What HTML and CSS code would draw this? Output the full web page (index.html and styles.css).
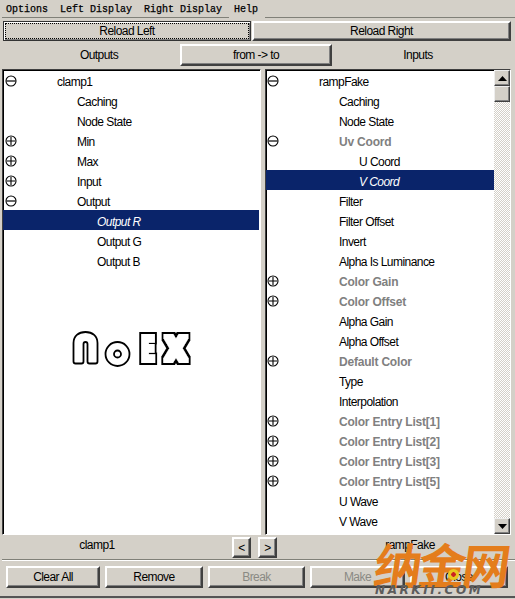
FILE: index.html
```html
<!DOCTYPE html>
<html lang="en">
<head>
<meta charset="utf-8">
<title>Connection Editor</title>
<link rel="stylesheet" href="styles.css">
</head>
<body>
<div class="window">
  <nav class="menubar">
    <span class="menu">Options</span><span class="menu">Left Display</span><span class="menu">Right Display</span><span class="menu help">Help</span>
  </nav>
  <div class="reload-row">
    <button class="btn reload-left focused">Reload Left</button>
    <button class="btn reload-right">Reload Right</button>
  </div>
  <div class="header-row">
    <div class="head-label head-left">Outputs</div>
    <button class="btn from-to">from -&gt; to</button>
    <div class="head-label head-right">Inputs</div>
  </div>
  <div class="panels">
    <section class="panel panel-left">
      <div class="tree">
        <div class="row"><svg class="ico"><use href="#minus"/></svg><span class="label l0">clamp1</span></div>
        <div class="row"><span class="label l1">Caching</span></div>
        <div class="row"><span class="label l1">Node State</span></div>
        <div class="row"><svg class="ico"><use href="#plus"/></svg><span class="label l1">Min</span></div>
        <div class="row"><svg class="ico"><use href="#plus"/></svg><span class="label l1">Max</span></div>
        <div class="row"><svg class="ico"><use href="#plus"/></svg><span class="label l1">Input</span></div>
        <div class="row"><svg class="ico"><use href="#minus"/></svg><span class="label l1">Output</span></div>
        <div class="row sel"><span class="label l2">Output R</span></div>
        <div class="row"><span class="label l2">Output G</span></div>
        <div class="row"><span class="label l2">Output B</span></div>
      </div>
      <svg class="logo" width="124" height="64" viewBox="0 -12 124 64" role="img" aria-label="NoEX">
        <defs>
          <filter id="fat" x="-50%" y="-30%" width="200%" height="160%">
            <feMorphology in="SourceAlpha" operator="dilate" radius="3.5" result="outer"/>
            <feMorphology in="SourceAlpha" operator="dilate" radius="2" result="inner"/>
            <feFlood flood-color="#fff"/>
            <feComposite in2="inner" operator="in" result="white"/>
            <feMerge><feMergeNode in="outer"/><feMergeNode in="white"/></feMerge>
          </filter>
        </defs>
        <path class="logo-shape" d="M3.5 31.5V13C3.5 6 8.5 2 15.5 2S27.5 6 27.5 13V31.5Q27.5 33.5 25.5 33.5H19.5Q17.5 33.5 17.5 31.5V14Q17.5 12 15.5 12T13.5 14V31.5Q13.5 33.5 11.5 33.5H5.5Q3.5 33.5 3.5 31.5Z"/>
        <circle class="logo-shape" cx="47.5" cy="24" r="12"/>
        <circle class="logo-shape" cx="47.5" cy="24" r="3.5"/>
        <text class="logo-text" x="71.5" y="30.5" textLength="13" lengthAdjust="spacingAndGlyphs">E</text>
        <text class="logo-text" x="94.5" y="30.5" textLength="23" lengthAdjust="spacingAndGlyphs">X</text>
      </svg>
    </section>
    <section class="panel panel-right">
      <div class="tree">
        <div class="row"><svg class="ico"><use href="#minus"/></svg><span class="label l0">rampFake</span></div>
        <div class="row"><span class="label l1">Caching</span></div>
        <div class="row"><span class="label l1">Node State</span></div>
        <div class="row"><svg class="ico"><use href="#minus"/></svg><span class="label l1 dim">Uv Coord</span></div>
        <div class="row"><span class="label l2">U Coord</span></div>
        <div class="row sel"><span class="label l2">V Coord</span></div>
        <div class="row"><span class="label l1">Filter</span></div>
        <div class="row"><span class="label l1">Filter Offset</span></div>
        <div class="row"><span class="label l1">Invert</span></div>
        <div class="row"><span class="label l1">Alpha Is Luminance</span></div>
        <div class="row"><svg class="ico"><use href="#plus"/></svg><span class="label l1 dim">Color Gain</span></div>
        <div class="row"><svg class="ico"><use href="#plus"/></svg><span class="label l1 dim">Color Offset</span></div>
        <div class="row"><span class="label l1">Alpha Gain</span></div>
        <div class="row"><span class="label l1">Alpha Offset</span></div>
        <div class="row"><svg class="ico"><use href="#plus"/></svg><span class="label l1 dim">Default Color</span></div>
        <div class="row"><span class="label l1">Type</span></div>
        <div class="row"><span class="label l1">Interpolation</span></div>
        <div class="row"><svg class="ico"><use href="#plus"/></svg><span class="label l1 dim">Color Entry List[1]</span></div>
        <div class="row"><svg class="ico"><use href="#plus"/></svg><span class="label l1 dim">Color Entry List[2]</span></div>
        <div class="row"><svg class="ico"><use href="#plus"/></svg><span class="label l1 dim">Color Entry List[3]</span></div>
        <div class="row"><svg class="ico"><use href="#plus"/></svg><span class="label l1 dim">Color Entry List[5]</span></div>
        <div class="row"><span class="label l1">U Wave</span></div>
        <div class="row"><span class="label l1">V Wave</span></div>
      </div>
      <div class="scrollbar">
        <div class="sb-btn"><svg width="9" height="5"><path d="M4.5 0L9 5H0z"/></svg></div>
        <div class="sb-thumb"></div>
        <div class="sb-track"></div>
        <div class="sb-btn"><svg width="9" height="5"><path d="M0 0H9L4.5 5z"/></svg></div>
      </div>
    </section>
  </div>
  <div class="name-row">
    <div class="name name-left">clamp1</div>
    <button class="btn nav">&lt;</button>
    <button class="btn nav">&gt;</button>
    <div class="name name-right">rampFake</div>
  </div>
  <div class="actions">
    <button class="btn act a1">Clear All</button>
    <button class="btn act a2">Remove</button>
    <button class="btn act a3" disabled>Break</button>
    <button class="btn act a4" disabled>Make</button>
    <button class="btn act a5">Close</button>
  </div>
  <div class="watermark">
    <span class="wm-cn">纳金网</span>
    <span class="wm-en">NARKII.COM</span>
    <span class="cursor-dot"></span>
  </div>
</div>
<svg class="defs" width="0" height="0">
  <symbol id="minus" viewBox="0 0 12 12"><circle cx="6" cy="6" r="5" fill="none" stroke="#000" stroke-width="1.1"/><path d="M1.5 6h9" stroke="#000" stroke-width="1.2"/></symbol>
  <symbol id="plus" viewBox="0 0 12 12"><circle cx="6" cy="6" r="5" fill="none" stroke="#000" stroke-width="1.1"/><path d="M2 6h8M6 2v8" stroke="#000" stroke-width="1.1"/></symbol>
</svg>
</body>
</html>
```
FILE: styles.css
```css
* { box-sizing: border-box; }
html, body { margin: 0; padding: 0; }
body { width: 515px; height: 599px; overflow: hidden; background: #d4d0c8; font: 12px/14px "Liberation Sans", Arial, sans-serif; letter-spacing: -.55px; color: #000; }
.defs { position: absolute; }
.window { position: relative; width: 515px; height: 599px; }
.menubar { display: flex; gap: 12px; height: 18px; padding: 2px 0 0 4px; margin-left: 2px; font: 10px/15px "Liberation Mono", monospace; letter-spacing: 0; -webkit-text-stroke: .25px #000; border-bottom: 1px solid #808078; }
.help { padding: 0 7px 1px 5px; margin: 0 0 -1px -5px; background: #d4d0c8; }
.btn { display: block; padding: 0; margin: 0; font: 12px/14px "Liberation Sans", Arial, sans-serif; letter-spacing: -.55px; color: #000; background: #d4d0c8; border: 2px solid; border-color: #fff #404040 #404040 #fff; box-shadow: inset -1px -1px 0 #808080; border-radius: 0; }
.btn:disabled { color: #8a8a84; }
.reload-row { display: flex; gap: 1px; padding: 3px 4px 0 3px; }
.reload-left { width: 248px; height: 20px; }
.reload-right { width: 259px; height: 20px; }
.focused { outline: 1px dotted #000; outline-offset: -3px; border: 1px solid #333; box-shadow: inset 1px 1px 0 #fff, inset -1px -1px 0 #808080; }
.header-row { display: flex; align-items: center; height: 22px; margin-top: 3px; }
.head-label { text-align: center; }
.head-left { width: 180px; padding-left: 18px; }
.from-to { width: 152px; height: 22px; }
.head-right { width: 183px; padding-right: 11px; }
.panels { display: flex; gap: 4px; margin-top: 3px; padding: 0 4px 0 2px; height: 466px; }
.panel { position: relative; border: 1px solid; border-color: #404040 #fff #fff #404040; box-shadow: inset 1px 1px 0 #000; background: #fff; display: flex; overflow: hidden; }
.panel-left { width: 259px; padding-right: 1px; --base: 74px; --ico: 2px; }
.panel-right { width: 246px; --base: 73px; --ico: 1px; }
.tree { flex: 1; min-width: 0; }
.row { position: relative; height: 20px; padding-top: 4px; display: flex; align-items: center; }
.row.sel { background: #0a246a; color: #fff; font-style: italic; }
.ico { position: absolute; left: var(--ico); top: 5px; width: 12px; height: 12px; }
.label { white-space: nowrap; }
.l0 { margin-left: calc(var(--base) - 20px); }
.l1 { margin-left: var(--base); }
.l2 { margin-left: calc(var(--base) + 20px); }
.dim { color: #808080; font-weight: bold; letter-spacing: -.2px; }
.scrollbar { width: 16px; display: flex; flex-direction: column; flex: none; }
.sb-btn, .sb-thumb { background: #d4d0c8; border: 1px solid; border-color: #eee #404040 #404040 #eee; box-shadow: inset -1px -1px 0 #808080; flex: none; }
.sb-btn { height: 16px; display: flex; align-items: center; justify-content: center; }
.sb-thumb { height: 16px; }
.sb-track { flex: 1; background: repeating-conic-gradient(#d4d0c8 0 25%, #fff 0 50%) 0 0 / 2px 2px; }
.logo { position: absolute; left: 67px; top: 248px; }
.logo-shape { fill: #fff; stroke: #000; stroke-width: 1.8; }
.logo-text { font: bold 34px "DejaVu Sans", sans-serif; letter-spacing: 0; fill: #000; filter: url(#fat); }
.name-row { display: flex; align-items: flex-start; height: 25px; padding-top: 2px; border-bottom: 1px solid #808078; margin-left: 2px; box-shadow: 0 1px 0 #fff; }
.name { text-align: center; padding-top: 1px; }
.name-left { width: 230px; padding-right: 40px; }
.name-right { flex: 1; padding-left: 28px; }
.nav { width: 19px; height: 21px; }
.nav + .nav { margin-left: 7px; }
.actions { display: flex; gap: 5px; padding: 6px 0 0 6px; height: 38px; border-bottom: 2px solid #555; }
.act { width: 94px; height: 22px; }
.a2 { width: 98px; }
.a3 { width: 97px; }
.a4 { width: 95px; }
.a5 { width: 98px; }
.watermark { position: absolute; left: 372px; top: 536px; width: 143px; height: 60px; pointer-events: none; }
.wm-cn { position: absolute; left: 3px; top: -5px; font: bold 48px/64px "Noto Sans CJK SC", sans-serif; color: #e47d1c; letter-spacing: -4px; transform: skewX(-8deg); white-space: nowrap; }
.wm-en { position: absolute; left: 3px; top: 47px; font: italic bold 12px/14px "DejaVu Sans", sans-serif; color: #5c5c5c; letter-spacing: 2.6px; white-space: nowrap; }
.cursor-dot { position: absolute; left: 76px; top: 33px; width: 11px; height: 11px; border-radius: 50%; background: radial-gradient(circle, #c22 0 2px, #e8c820 2.5px); }
```
